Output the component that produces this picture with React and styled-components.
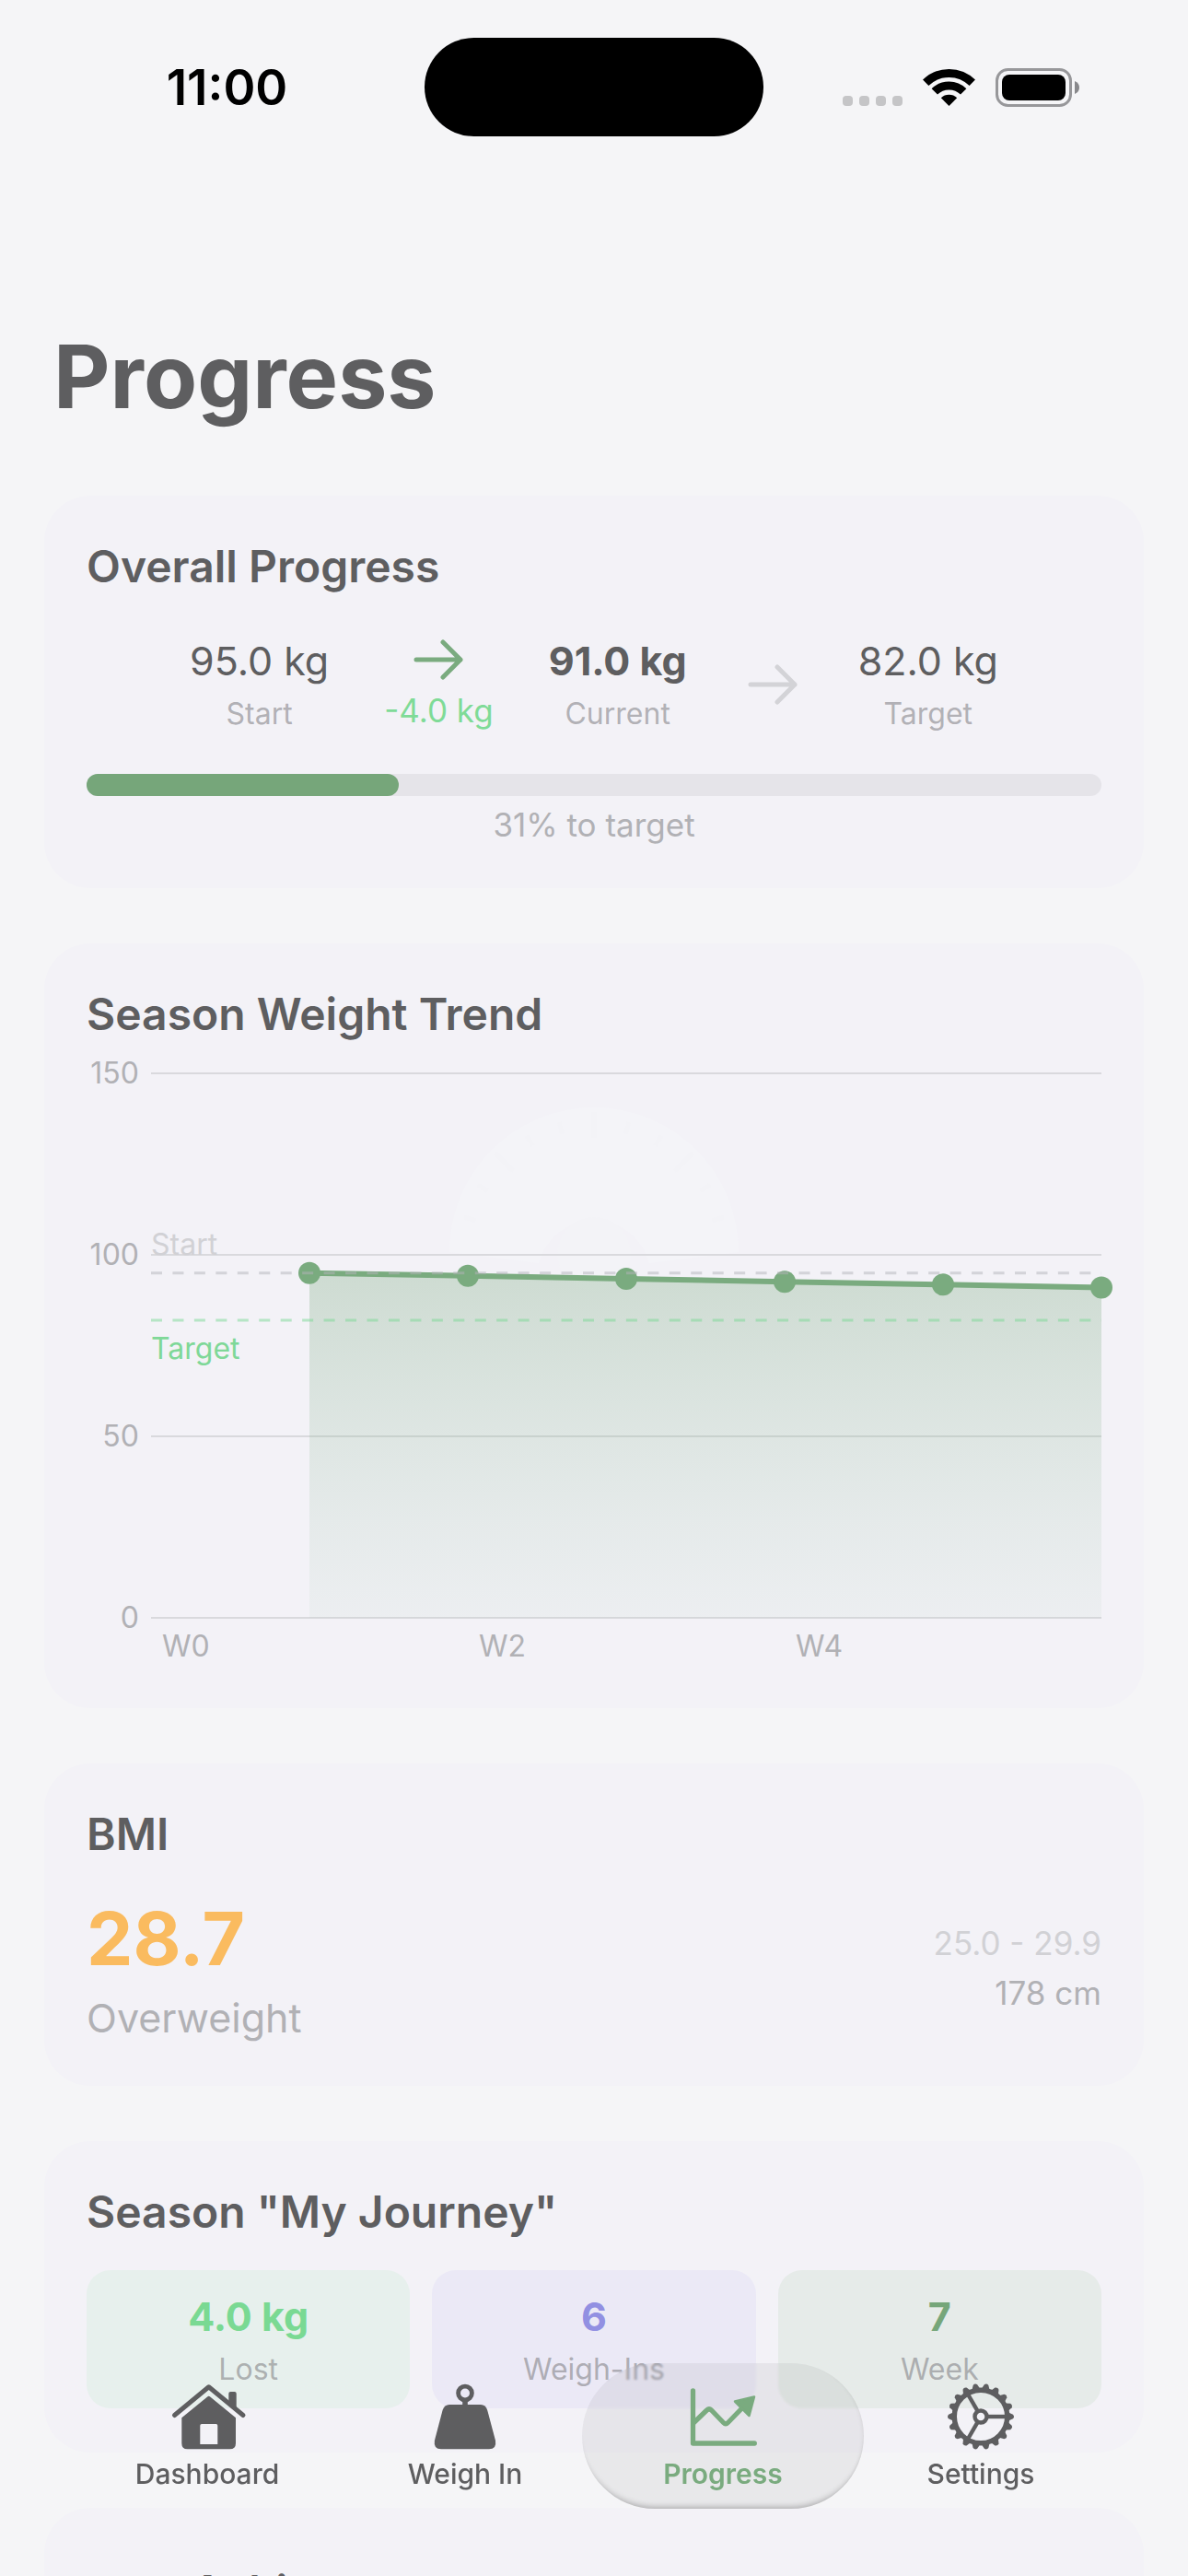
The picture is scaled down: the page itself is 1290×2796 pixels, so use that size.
// src/App.jsx

import React, { useState } from 'react';
import styled, { createGlobalStyle } from 'styled-components';

const season = {
  name: 'My Journey',
  start: 95,
  current: 91,
  target: 82,
  week: 7,
  weighIns: [95, 94.2, 93.4, 92.6, 91.8, 91],
};

const kg = (value) => `${value.toFixed(1)} kg`;

// Icons

const ArrowRight = ({ color }) => (
  <svg width="66" height="44" viewBox="0 0 66 44" fill="none" stroke={color} strokeWidth="5" strokeLinecap="round" strokeLinejoin="round" aria-hidden="true">
    <path d="M9 22H57M38 3L57 22L38 41" />
  </svg>
);

const WifiIcon = () => (
  <svg width="57" height="42" viewBox="0 0 57 42" aria-hidden="true">
    <g fill="none" stroke="#000" strokeWidth="9">
      <path d="M3.2 15.8A36 36 0 0 1 53.8 15.8" />
      <path d="M12.8 25.4A22.3 22.3 0 0 1 44.2 25.4" />
    </g>
    <path d="M28.5 41L19.8 32.2A12.6 12.6 0 0 1 37.2 32.2Z" />
  </svg>
);

const BatteryIcon = () => (
  <svg width="91" height="42" viewBox="0 0 91 42" aria-hidden="true">
    <rect x="1.5" y="1.5" width="80" height="39" rx="12" fill="none" stroke="#97979a" strokeWidth="3" />
    <rect x="7" y="7" width="69" height="28" rx="8" />
    <path d="M86 14Q91 16 91 21T86 28Z" fill="#88888b" />
  </svg>
);

const HouseIcon = () => (
  <svg width="80" height="72" viewBox="-2 0 80 72" overflow="visible" aria-hidden="true">
    <path d="M2.5 34.5L39.7 3.8L77 34.5" fill="none" stroke="currentColor" strokeWidth="5" strokeLinecap="round" strokeLinejoin="round" />
    <path d="M61.3 22V11Q61.3 9 63.3 9H67.7Q69.7 9 69.7 11V28Z" fill="currentColor" />
    <path
      fillRule="evenodd"
      fill="currentColor"
      d="M38.2 14.4Q39.7 13.2 41.2 14.4L69 37.3V65Q69 71.3 62.5 71.3H16.5Q10.3 71.3 10.3 65V37.3ZM32 44Q30.3 44 30.3 45.7V66H49.3V45.7Q49.3 44 47.6 44Z"
    />
  </svg>
);

const WeightIcon = () => (
  <svg width="80" height="72" viewBox="0 0 80 72" aria-hidden="true">
    <circle cx="40" cy="10.5" r="7.4" fill="none" stroke="currentColor" strokeWidth="4.8" />
    <rect x="37.2" y="18" width="5.6" height="7" fill="currentColor" />
    <path d="M23 23H57Q62.5 23 64.2 29L73 62Q74.5 71.3 66 71.3H14Q5.5 71.3 6.9 62L15.6 29Q17.5 23 23 23Z" fill="currentColor" />
  </svg>
);

const TrendIcon = () => (
  <svg width="80" height="72" viewBox="0 0 80 72" fill="none" stroke="currentColor" strokeWidth="5.3" strokeLinecap="round" strokeLinejoin="round" aria-hidden="true">
    <path d="M7.5 8V65H74.3" />
    <path d="M9 42L22.5 29Q25 26.7 27.5 29L40.5 42.5Q43 45 45.5 42.5L63 24.5" />
    <path d="M74 14.5L53 19.5L68.5 35Z" fill="currentColor" strokeWidth="2.5" />
  </svg>
);

const teeth = Array.from({ length: 18 }, (_, i) => i * 20);

const GearIcon = () => (
  <svg width="80" height="74" viewBox="0 0 80 74" aria-hidden="true">
    <g transform="translate(40 37)" fill="none" stroke="currentColor" strokeWidth="4.4">
      <circle r="28.7" strokeWidth="5.4" />
      <circle r="6.5" />
      {[0, 120, 240].map((angle) => (
        <path key={angle} d="M7 0H28" transform={`rotate(${angle})`} />
      ))}
      {teeth.map((angle) => (
        <path
          key={angle}
          d="M30 -4.5L35 -2.3Q37 0 35 2.3L30 4.5Z"
          transform={`rotate(${angle})`}
          fill="currentColor"
          stroke="none"
        />
      ))}
    </g>
  </svg>
);

// Weight chart

const PLOT_LEFT = 70;
const PLOT_RIGHT = 1102;
const BASELINE = 612;
const WEEK_STEP = 172;

const toY = (value) => BASELINE - value * 3.94;
const toX = (week) => PLOT_LEFT + week * WEEK_STEP;

const WeightChart = ({ data }) => {
  const points = data.map((value, index) => ({ x: toX(index + 1), y: toY(value) }));
  const line = points.map(({ x, y }) => `${x},${y}`).join(' ');
  const first = points[0].x;
  const last = points[points.length - 1].x;

  return (
    <Chart viewBox="0 0 1102 662" role="img" aria-label="Season weight trend">
      <defs>
        <linearGradient id="area" x1="0" y1="0" x2="0" y2="1">
          <stop offset="0" stopColor="#76a67a" stopOpacity="0.3" />
          <stop offset="1" stopColor="#9cc3a8" stopOpacity="0.08" />
        </linearGradient>
      </defs>

      {/* bathroom scale dial behind the plot */}
      <g transform="translate(551 215)">
        <path d="M-157 0A157 157 0 0 1 157 0L60 12A62 62 0 0 0 -60 12Z" fill="#f4f4f8" />
        {[-75, -60, -45, -30, -15, 0, 15, 30, 45, 60, 75].map((angle) => (
          <path key={angle} d={angle % 45 ? 'M0 -146V-133' : 'M0 -152V-124'} stroke="#f3f3f7" strokeWidth="5" transform={`rotate(${angle})`} />
        ))}
        <circle r="40" cy="2" fill="#f3f3f7" />
      </g>

      {[0, 50, 100, 150].map((value) => (
        <g key={value}>
          <line x1={PLOT_LEFT} x2={PLOT_RIGHT} y1={toY(value)} y2={toY(value)} stroke="#d9d9dd" strokeWidth="2" />
          <AxisText x="57" y={toY(value) + 11} textAnchor="end">{value}</AxisText>
        </g>
      ))}
      {[0, 2, 4].map((week) => (
        <AxisText key={week} x={toX(week) + 12} y="654">{`W${week}`}</AxisText>
      ))}

      <polygon points={`${first},${BASELINE} ${line} ${last},${BASELINE}`} fill="url(#area)" />
      <polyline points={line} fill="none" stroke="#7aab7f" strokeWidth="6" strokeLinejoin="round" />
      {points.map(({ x, y }) => (
        <circle key={x} cx={x} cy={y} r="12" fill="#7aab7f" />
      ))}

      <g strokeWidth="3" strokeDasharray="12 11.45">
        <line x1={PLOT_LEFT} x2={PLOT_RIGHT} y1={toY(season.start)} y2={toY(season.start)} stroke="#b4b4b9" strokeOpacity="0.5" />
        <line x1={PLOT_LEFT} x2={PLOT_RIGHT} y1={toY(season.target)} y2={toY(season.target)} stroke="#79d893" strokeOpacity="0.5" />
      </g>
      <AxisText x={PLOT_LEFT} y="218" $color="#d1d1d5">Start</AxisText>
      <AxisText x={PLOT_LEFT} y="331" $color="#7fd898">Target</AxisText>
    </Chart>
  );
};

const tabs = [
  { name: 'Dashboard', Icon: HouseIcon },
  { name: 'Weigh In', Icon: WeightIcon },
  { name: 'Progress', Icon: TrendIcon },
  { name: 'Settings', Icon: GearIcon },
];

const App = () => {
  const [activeTab, setActiveTab] = useState('Progress');

  const change = season.current - season.start;
  const percent = (change / (season.target - season.start)) * 100;

  return (
    <Screen>
      <GlobalStyle />

      <StatusBar>
        <Time>11:00</Time>
        <Island />
        <StatusIcons>
          <Signal>
            <Dot /><Dot /><Dot /><Dot />
          </Signal>
          <WifiIcon />
          <BatteryIcon />
        </StatusIcons>
      </StatusBar>

      <PageTitle>Progress</PageTitle>

      <Cards>
        <Card>
          <CardTitle>Overall Progress</CardTitle>
          <Milestones>
            <Stat>
              <Value>{kg(season.start)}</Value>
              <Label>Start</Label>
            </Stat>
            <Stat>
              <ArrowRight color="#7aab7f" />
              <Caption $color="#7fdb97">{kg(change)}</Caption>
            </Stat>
            <Stat>
              <Value $bold>{kg(season.current)}</Value>
              <Label>Current</Label>
            </Stat>
            <ArrowRight color="#d3d3d7" />
            <Stat>
              <Value>{kg(season.target)}</Value>
              <Label>Target</Label>
            </Stat>
          </Milestones>
          <Track role="progressbar" aria-label="Overall progress" aria-valuenow={Math.round(percent)}>
            <Fill style={{ width: `${percent}%` }} />
          </Track>
          <TrackCaption>{Math.round(percent)}% to target</TrackCaption>
        </Card>

        <Card>
          <CardTitle>Season Weight Trend</CardTitle>
          <WeightChart data={season.weighIns} />
        </Card>

        <Card>
          <CardTitle>BMI</CardTitle>
          <BmiRow>
            <BmiColumn>
              <BmiValue>28.7</BmiValue>
              <Value $color="#b1b1b5">Overweight</Value>
            </BmiColumn>
            <BmiColumn $end>
              <Caption $color="#d1d1d5">25.0 - 29.9</Caption>
              <Caption>178 cm</Caption>
            </BmiColumn>
          </BmiRow>
        </Card>

        <Card>
          <CardTitle>Season "{season.name}"</CardTitle>
          <Tiles>
            <Tile $background="#e7f0ed">
              <Value $bold $color="#7ad993">{kg(-change)}</Value>
              <Label>Lost</Label>
            </Tile>
            <Tile $background="#ebe9f6">
              <Value $bold $color="#9290e2">{season.weighIns.length}</Value>
              <Label>Weigh-Ins</Label>
            </Tile>
            <Tile $background="#e6ebe9">
              <Value $bold $color="#76a67a">{season.week}</Value>
              <Label>Week</Label>
            </Tile>
          </Tiles>
        </Card>

        <Card>
          <EmptyTitle>Achievements</EmptyTitle>
        </Card>
      </Cards>

      <TabBar>
        {tabs.map(({ name, Icon }) => (
          <Tab key={name} type="button" $active={name === activeTab} onClick={() => setActiveTab(name)}>
            <IconSlot>
              <Icon />
            </IconSlot>
            {name}
          </Tab>
        ))}
      </TabBar>
    </Screen>
  );
};

// Styled-components

const GlobalStyle = createGlobalStyle`
  * {
    box-sizing: border-box;
  }

  body {
    margin: 0;
    background: #f5f5f7;
    font-family: Inter, "Liberation Sans", sans-serif;
    color: #5e5e60;
  }
`;

const Screen = styled.div`
  height: 100vh;
  overflow-y: auto;
  scrollbar-width: none;
`;

const StatusBar = styled.header`
  display: grid;
  grid-template-columns: 1fr 368px 1fr;
  align-items: center;
  padding: 41px 32px 0;
`;

const Time = styled.time`
  text-align: center;
  font-size: 53px;
  font-weight: 600;
  color: #000;
`;

const Island = styled.div`
  height: 107px;
  border-radius: 54px;
  background: #000;
`;

const StatusIcons = styled.div`
  display: flex;
  align-items: flex-end;
  justify-content: center;
  gap: 22px;
`;

const Signal = styled.div`
  display: flex;
  gap: 7px;
  padding-bottom: 1px;
`;

const Dot = styled.span`
  width: 11px;
  height: 11px;
  border-radius: 4px;
  background: #c5c5c7;
`;

const PageTitle = styled.h1`
  margin: 203px 58px 71px;
  font-size: 95px;
  line-height: 116px;
  font-weight: 700;
`;

const Cards = styled.main`
  display: flex;
  flex-direction: column;
  gap: 60px;
  padding: 0 48px 240px;
`;

const Card = styled.section`
  padding: 48px 46px;
  border-radius: 50px;
  background: #f3f2f7;
`;

const CardTitle = styled.h2`
  margin: 0;
  font-size: 48px;
  line-height: 58px;
  font-weight: 600;
`;

const EmptyTitle = styled(CardTitle)`
  padding: 14px 114px;
`;

const Milestones = styled.div`
  display: flex;
  align-items: center;
  justify-content: center;
  gap: 60px;
  margin: 47px 0 45px;
`;

const Stat = styled.div`
  display: flex;
  flex-direction: column;
  align-items: center;
  gap: 12px;
`;

const Value = styled.div`
  font-size: 43px;
  line-height: 52px;
  font-weight: ${({ $bold }) => ($bold ? 700 : 400)};
  color: ${({ $color }) => $color || '#5e5e60'};
`;

const Label = styled.div`
  font-size: 32px;
  line-height: 40px;
  color: rgba(128, 128, 132, 0.58);
`;

const Caption = styled.div`
  font-size: 35px;
  line-height: 42px;
  color: ${({ $color }) => $color || '#b1b1b5'};
`;

const Track = styled.div`
  height: 24px;
  border-radius: 12px;
  background: #e5e4e9;
`;

const Fill = styled.div`
  height: 100%;
  border-radius: 12px;
  background: #76a67a;
`;

const TrackCaption = styled(Caption)`
  margin-top: 10px;
  text-align: center;
`;

const Chart = styled.svg`
  display: block;
  width: 100%;
  margin-top: 14px;
  overflow: visible;
`;

const AxisText = styled.text`
  font-size: 32px;
  fill: ${({ $color }) => $color || '#b1b1b5'};
`;

const BmiRow = styled.div`
  display: flex;
  align-items: center;
  justify-content: space-between;
  margin-top: 36px;
`;

const BmiColumn = styled.div`
  display: flex;
  flex-direction: column;
  gap: 12px;
  text-align: ${({ $end }) => ($end ? 'right' : 'left')};
`;

const BmiValue = styled.div`
  font-size: 80px;
  line-height: 96px;
  font-weight: 700;
  color: #fabb5f;
`;

const Tiles = styled.div`
  display: grid;
  grid-template-columns: repeat(3, 1fr);
  gap: 24px;
  margin-top: 34px;
`;

const Tile = styled(Stat)`
  padding: 24px 0 22px;
  border-radius: 26px;
  background: ${({ $background }) => $background};
`;

const TabBar = styled.nav`
  position: fixed;
  left: 85px;
  right: 85px;
  bottom: 73px;
  display: grid;
  grid-template-columns: repeat(4, 1fr);
`;

const Tab = styled.button`
  display: flex;
  flex-direction: column;
  align-items: center;
  gap: 8px;
  margin: 0 -13px;
  padding: 22px 0 20px;
  border: 0;
  border-radius: 79px;
  font-family: inherit;
  font-size: 30px;
  line-height: 36px;
  font-weight: ${({ $active }) => ($active ? 600 : 500)};
  color: ${({ $active }) => ($active ? '#7aab7f' : '#5e5e60')};
  background: ${({ $active }) => ($active ? 'rgba(20, 20, 20, 0.055)' : 'transparent')};
  box-shadow: ${({ $active }) =>
    $active
      ? 'inset 0 -8px 6px -6px rgba(0, 0, 0, 0.25), inset -6px 0 5px -6px rgba(0, 0, 0, 0.1)'
      : 'none'};
  backdrop-filter: ${({ $active }) => ($active ? 'blur(1px)' : 'none')};
`;

const IconSlot = styled.span`
  display: flex;
  align-items: center;
  height: 72px;
`;

export default App;
